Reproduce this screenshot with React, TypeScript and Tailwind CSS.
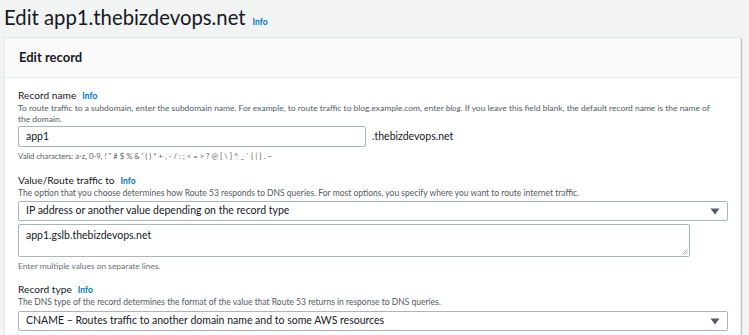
import React from "react";

function Info() {
  return <span className="ml-[6px] text-[8.5px] font-bold text-[#0073bb]">Info</span>;
}

function Caret() {
  return (
    <svg width="10" height="7" viewBox="0 0 10 7" className="shrink-0">
      <path d="M0.5 0.5 H9.5 L5 6.5 Z" fill="#545b64" />
    </svg>
  );
}

export default function App() {
  return (
    <div className="w-[749px] h-[335px] bg-[#f2f3f3] overflow-hidden font-['Lato',sans-serif] text-[#16191f]">
      <div className="flex items-baseline pl-[4px] h-[35px] pt-[1px]">
        <h1 className="text-[20.3px] leading-[32px]">Edit app1.thebizdevops.net</h1>
        <span className="ml-[7px] text-[8.5px] font-bold text-[#0073bb]">Info</span>
      </div>
      <div className="ml-[4px] mt-[2px] w-[737px] bg-white border border-[#e4e7e7] shadow-[1px_1px_1px_rgba(0,28,36,0.2)]">
        <div className="h-[40px] bg-[#fafafa] border-b border-[#eaeded] flex items-center px-[14px]">
          <span className="text-[13px] font-bold">Edit record</span>
        </div>
        <div className="pl-[13px] pr-[4px] pt-[11px] pb-[20px]">
          <div className="flex items-center h-[14px]">
            <span className="text-[10.2px]">Record name</span>
            <Info />
          </div>
          <p className="w-[704px] text-[8.45px] leading-[11px] text-[#545b64]">
            To route traffic to a subdomain, enter the subdomain name. For example, to route traffic to blog.example.com, enter <i>blog</i>. If you leave this field blank, the default record name is the name of the domain.
          </p>
          <div className="flex items-center mt-[1px]">
            <div className="w-[348px] h-[21px] border border-[#aab7b8] rounded-[2px] flex items-center px-[7px] text-[10.5px]">app1</div>
            <span className="ml-[6px] text-[10.5px]">.thebizdevops.net</span>
          </div>
          <p className="text-[7.7px] leading-[12px] text-[#545b64] mt-[3px]">
            Valid characters: a-z, 0-9, ! " # $ % &amp; ' ( ) * + , - / : ; &lt; = &gt; ? @ [ \ ] ^ _ ` {"{"} | {"}"} . ~
          </p>

          <div className="flex items-center h-[14px] mt-[12px]">
            <span className="text-[10.2px]">Value/Route traffic to</span>
            <Info />
          </div>
          <p className="text-[8.5px] leading-[11px] text-[#545b64]">
            The option that you choose determines how Route 53 responds to DNS queries. For most options, you specify where you want to route internet traffic.
          </p>
          <div className="w-[710px] h-[20px] mt-[2px] border border-[#aab7b8] rounded-[2px] flex items-center justify-between pl-[7px] pr-[7px] text-[10.5px]">
            <span>IP address or another value depending on the record type</span>
            <Caret />
          </div>
          <div className="relative w-[672px] h-[33px] mt-[3px] border border-[#aab7b8] rounded-[2px] px-[7px] pt-[3px] text-[10.5px]">
            app1.gslb.thebizdevops.net
            <svg width="6" height="6" viewBox="0 0 6 6" className="absolute right-[1px] bottom-[1px]">
              <path d="M5.5 0.5 L0.5 5.5 M5.5 3 L3 5.5" stroke="#8a9394" strokeWidth="0.8" />
            </svg>
          </div>
          <p className="text-[8.4px] leading-[12px] text-[#687078] mt-[3px]">Enter multiple values on separate lines.</p>

          <div className="flex items-center h-[14px] mt-[11px]">
            <span className="text-[10.2px]">Record type</span>
            <Info />
          </div>
          <p className="text-[8.5px] leading-[11px] text-[#545b64]">
            The DNS type of the record determines the format of the value that Route 53 returns in response to DNS queries.
          </p>
          <div className="w-[710px] h-[20px] mt-[3px] border border-[#aab7b8] rounded-[2px] flex items-center justify-between pl-[7px] pr-[7px] text-[10.5px]">
            <span>CNAME – Routes traffic to another domain name and to some AWS resources</span>
            <Caret />
          </div>
        </div>
      </div>
    </div>
  );
}
